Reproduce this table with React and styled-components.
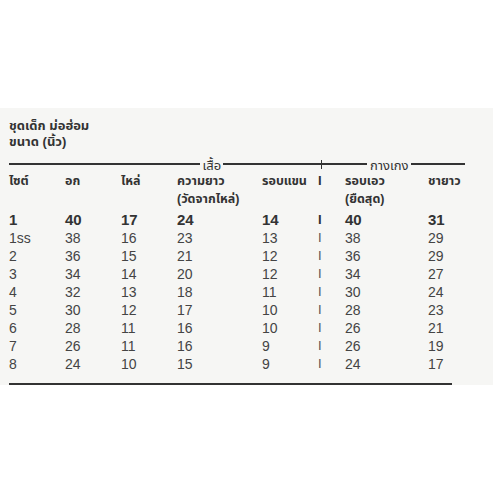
import styled, { createGlobalStyle } from "styled-components";

const GlobalStyle = createGlobalStyle`
  html, body {
    margin: 0;
    padding: 0;
    background: #ffffff;
  }
  body {
    font-family: "Liberation Sans", "Noto Sans Thai", "Noto Sans", sans-serif;
    color: #3a3a3a;
  }
`;

const Page = styled.div`
  width: 493px;
  height: 493px;
  padding-top: 108px;
  box-sizing: border-box;
`;

const Sheet = styled.div`
  background: #f6f6f4;
  padding: 10px 0 0 9px;
`;

const Title = styled.div`
  font-size: 13px;
  font-weight: bold;
  line-height: 16px;
  color: #333;
`;

const SectionBar = styled.div`
  display: flex;
  align-items: center;
  width: 456px;
  height: 12px;
  margin-top: 8px;
`;

const Rule = styled.div`
  width: ${(p) => p.$w}px;
  height: 1.5px;
  background: #333;
`;

const Tick = styled.div`
  width: 1.5px;
  height: 9px;
  background: #333;
`;

const Label = styled.span`
  width: ${(p) => p.$w}px;
  padding-top: 4px;
  text-align: center;
  font-size: 13px;
  line-height: 12px;
  color: #333;
  white-space: nowrap;
`;

const Grid = styled.div`
  display: grid;
  grid-template-columns: 56px 56px 56px 85px 56px 27px 83px 60px;
  line-height: 18px;
`;

const HeadRow = styled(Grid)`
  margin-top: 2px;
  font-size: 12.5px;
  font-weight: bold;
  color: #333;
`;

const DataRow = styled(Grid)`
  font-size: ${(p) => (p.$bold ? 15 : 14)}px;
  font-weight: ${(p) => (p.$bold ? "bold" : "normal")};
  color: ${(p) => (p.$bold ? "#333" : "#444")};
  margin-top: ${(p) => (p.$first ? 3 : 0)}px;
`;

const Cell = styled.div`
  white-space: nowrap;
`;

const Bar = styled.div`
  color: ${(p) => (p.$strong ? "#333" : "#555")};
  font-weight: ${(p) => (p.$strong ? "bold" : "normal")};
  font-size: 13px;
`;

const BottomRule = styled.div`
  width: 443px;
  height: 1.5px;
  background: #333;
  margin-top: 10px;
`;

const rows = [
  ["1", "40", "17", "24", "14", "40", "31"],
  ["1ss", "38", "16", "23", "13", "38", "29"],
  ["2", "36", "15", "21", "12", "36", "29"],
  ["3", "34", "14", "20", "12", "34", "27"],
  ["4", "32", "13", "18", "11", "30", "24"],
  ["5", "30", "12", "17", "10", "28", "23"],
  ["6", "28", "11", "16", "10", "26", "21"],
  ["7", "26", "11", "16", "9", "26", "19"],
  ["8", "24", "10", "15", "9", "24", "17"],
];

export default function App() {
  return (
    <Page>
      <GlobalStyle />
      <Sheet>
        <Title>ชุดเด็ก ม่อฮ่อม</Title>
        <Title>ขนาด (นิ้ว)</Title>

        <SectionBar>
          <Rule $w={192} />
          <Label $w={23}>เสื้อ</Label>
          <Rule $w={98} />
          <Tick />
          <Rule $w={45} />
          <Label $w={44}>กางเกง</Label>
          <Rule $w={54} />
        </SectionBar>

        <HeadRow>
          <Cell>ไซต์</Cell>
          <Cell>อก</Cell>
          <Cell>ไหล่</Cell>
          <Cell>
            ความยาว
            <br />
            (วัดจากไหล่)
          </Cell>
          <Cell>รอบแขน</Cell>
          <Bar $strong>I</Bar>
          <Cell>
            รอบเอว
            <br />
            (ยืดสุด)
          </Cell>
          <Cell>ชายาว</Cell>
        </HeadRow>

        {rows.map((r, i) => (
          <DataRow key={i} $bold={i === 0} $first={i === 0}>
            <Cell>{r[0]}</Cell>
            <Cell>{r[1]}</Cell>
            <Cell>{r[2]}</Cell>
            <Cell>{r[3]}</Cell>
            <Cell>{r[4]}</Cell>
            <Bar $strong={i === 0}>I</Bar>
            <Cell>{r[5]}</Cell>
            <Cell>{r[6]}</Cell>
          </DataRow>
        ))}

        <BottomRule />
      </Sheet>
    </Page>
  );
}
